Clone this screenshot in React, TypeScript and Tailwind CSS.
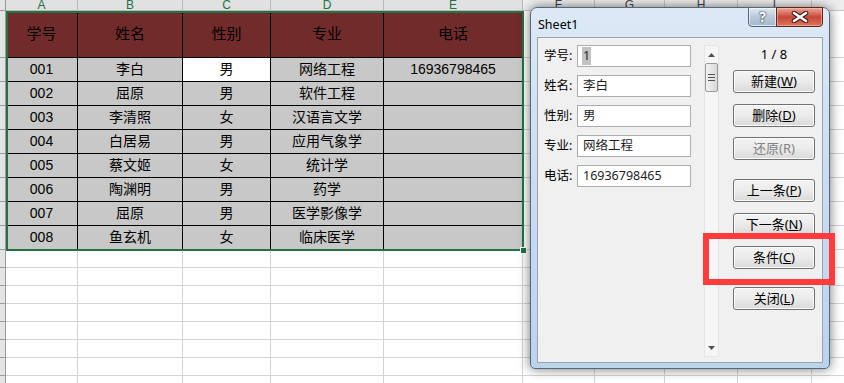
const COLS = [
  "w-[72px]", "w-[105px]", "w-[88px]", "w-[113px]", "w-[139px]",
  "w-[72px]", "w-[70px]", "w-[73px]", "w-[74px]", "w-[74px]",
];
const LETTERS = ["A", "B", "C", "D", "E", "F", "G", "H", "I", "J"];
const HEAD = ["学号", "姓名", "性别", "专业", "电话"];
const ROWS = [
  ["001", "李白", "男", "网络工程", "16936798465"],
  ["002", "屈原", "男", "软件工程", ""],
  ["003", "李清照", "女", "汉语言文学", ""],
  ["004", "白居易", "男", "应用气象学", ""],
  ["005", "蔡文姬", "女", "统计学", ""],
  ["006", "陶渊明", "男", "药学", ""],
  ["007", "屈原", "男", "医学影像学", ""],
  ["008", "鱼玄机", "女", "临床医学", ""],
];
const FIELDS = [
  { label: "学号", value: "1" },
  { label: "姓名", value: "李白" },
  { label: "性别", value: "男" },
  { label: "专业", value: "网络工程" },
  { label: "电话", value: "16936798465" },
];

const sheetFont = { fontFamily: '"Liberation Sans", "Noto Sans CJK SC", sans-serif' };
const uiFont = { fontFamily: '"Noto Sans", "Noto Sans CJK SC", sans-serif' };

function Strip({ h }: { h: string }) {
  return <div className={`${h} w-[6px] shrink-0 bg-[#e4e4e4] border-r border-b border-[#9b9b9b]`} />;
}

function Btn({ label, keyChar, disabled, className = "" }: { label: string; keyChar: string; disabled?: boolean; className?: string }) {
  return (
    <div className={`h-[23px] w-[82px] rounded-[3px] border border-[#707070] bg-gradient-to-b from-[#f3f3f3] via-[#ebebeb] to-[#d9d9d9] shadow-[inset_0_0_0_1px_#fcfcfc] flex items-center justify-center text-[13px] ${disabled ? "text-[#838383]" : "text-black"} ${className}`}>
      {label}(<span className={disabled ? "" : "underline"}>{keyChar}</span>)
    </div>
  );
}

function Arrow({ up }: { up?: boolean }) {
  return (
    <div className="h-[17px] flex items-center justify-center">
      <svg width="7" height="4" viewBox="0 0 7 4">
        <path d={up ? "M0 4 L3.5 0 L7 4 Z" : "M0 0 L3.5 4 L7 0 Z"} fill="#505050" />
      </svg>
    </div>
  );
}

export default function App() {
  return (
    <div className="relative w-[844px] h-[383px] overflow-hidden bg-white" style={sheetFont}>
      {/* column letters */}
      <div className="flex h-[11px]">
        <div className="w-[6px] shrink-0 bg-[#e4e4e4] border-r border-b border-[#9b9b9b]" />
        {COLS.map((w, i) => (
          <div key={i} className={`${w} shrink-0 h-[11px] overflow-hidden flex items-end justify-center border-r border-b ${i < 5 ? "bg-[#e1e1e1] border-[#b8b8b8] text-[#217346]" : "bg-[#eeeeee] border-[#c6c6c6] text-[#444]"}`}>
            <span className="text-[12px] leading-[12px] translate-y-[1px]">{LETTERS[i]}</span>
          </div>
        ))}
      </div>

      {/* header row */}
      <div className="flex">
        <Strip h="h-[47px]" />
        {COLS.map((w, i) =>
          i < 5 ? (
            <div key={i} className={`${w} shrink-0 h-[47px] bg-[#722b2b] border-r border-b border-black flex items-center justify-center text-[15px] text-black`}>
              {HEAD[i]}
            </div>
          ) : (
            <div key={i} className={`${w} shrink-0 h-[47px] border-r border-b border-[#d4d4d4]`} />
          )
        )}
      </div>

      {/* data rows */}
      {ROWS.map((r, ri) => (
        <div key={ri} className="flex">
          <Strip h="h-[24px]" />
          {COLS.map((w, i) =>
            i < 5 ? (
              <div key={i} className={`${w} shrink-0 h-[24px] border-r border-b border-black flex items-center justify-center text-[14px] text-black ${ri === 0 && i === 2 ? "bg-white" : "bg-[#c8c8c8]"}`}>
                {r[i]}
              </div>
            ) : (
              <div key={i} className={`${w} shrink-0 h-[24px] border-r border-b border-[#d4d4d4]`} />
            )
          )}
        </div>
      ))}

      {/* empty rows */}
      {Array.from({ length: 8 }).map((_, ri) => (
        <div key={ri} className="flex">
          <Strip h="h-[18px]" />
          {COLS.map((w, i) => (
            <div key={i} className={`${w} shrink-0 h-[18px] border-r border-b border-[#d4d4d4]`} />
          ))}
        </div>
      ))}

      {/* selection border */}
      <div className="absolute left-[6px] top-[11px] w-[518px] h-[240px] border-2 border-[#217346]" />
      <div className="absolute left-[521px] top-[248px] w-[5px] h-[5px] bg-[#217346] outline outline-1 outline-white" />

      {/* dialog */}
      <div className="absolute left-[530px] top-[7px] w-[300px] h-[362px] rounded-t-[7px] rounded-b-[5px] border border-[#55677b] bg-gradient-to-b from-[#dde9f6] via-[#cadcf0] to-[#bcd3ec] shadow-[0_0_12px_rgba(0,0,0,0.55)] flex flex-col px-[6px] pb-[5px]" style={uiFont}>
        <div className="h-[29px] flex items-start justify-between">
          <span className="mt-[8px] ml-[1px] text-[12.5px] text-black">Sheet1</span>
          <div className="flex -mt-px">
            <div className="w-[29px] h-[20px] rounded-bl-[4px] border border-[#56687c] bg-gradient-to-b from-[#dfe8f2] via-[#b9c9da] to-[#a4b8cd] shadow-[inset_0_0_0_1px_rgba(255,255,255,0.6)] flex items-center justify-center">
              <span className="text-[14px] font-bold leading-none text-white [text-shadow:0_0_1px_#1e2a38,0_0_2px_#1e2a38]">?</span>
            </div>
            <div className="w-[47px] h-[20px] -ml-px rounded-br-[4px] border border-[#5e241d] bg-gradient-to-b from-[#e9a897] via-[#c7463a] to-[#d9745c] shadow-[inset_0_0_0_1px_rgba(255,200,190,0.5)] flex items-center justify-center">
              <svg width="18" height="12" viewBox="0 0 18 12">
                <path d="M3 2 L15 10 M15 2 L3 10" stroke="#4a1a14" strokeWidth="4.6" strokeLinecap="round" />
                <path d="M3 2 L15 10 M15 2 L3 10" stroke="#fff" strokeWidth="2.6" strokeLinecap="round" />
              </svg>
            </div>
          </div>
        </div>

        <div className="flex-1 bg-[#f0f0f0] border border-[#95a6b9] flex">
          {/* fields */}
          <div className="flex flex-col gap-[8px] pt-[7px] pl-[6px] w-[154px]">
            {FIELDS.map((f, i) => (
              <div key={f.label} className="flex items-center h-[22px]">
                <span className="w-[33px] text-[12.5px] text-black">{f.label}:</span>
                <div className="w-[114px] h-[22px] bg-white border border-[#abadb3] flex items-center pl-[4px] text-[12.5px] text-[#1e1e1e]">
                  <span className={i === 0 ? "bg-[#c2c2c2] px-[1px]" : "px-[1px]"}>{f.value}</span>
                </div>
              </div>
            ))}
          </div>

          {/* scrollbar */}
          <div className="ml-[12px] mt-[7px] mb-[5px] w-[15px] bg-[#f6f6f6] border border-[#e6e6e6] flex flex-col">
            <Arrow up />
            <div className="h-[29px] rounded-[2px] border border-[#9a9a9a] bg-gradient-to-r from-[#f2f2f2] to-[#d9d9d9] flex flex-col items-center justify-center gap-[2px]">
              <div className="w-[7px] h-px bg-[#555]" />
              <div className="w-[7px] h-px bg-[#555]" />
              <div className="w-[7px] h-px bg-[#555]" />
            </div>
            <div className="flex-1" />
            <Arrow />
          </div>

          {/* buttons */}
          <div className="ml-[14px] flex flex-col">
            <div className="mt-[7px] h-[20px] w-[82px] flex items-center justify-center text-[13px] text-black">1 / 8</div>
            <Btn className="mt-[5px]" label="新建" keyChar="W" />
            <Btn className="mt-[11px]" label="删除" keyChar="D" />
            <Btn className="mt-[10px]" label="还原" keyChar="R" disabled />
            <Btn className="mt-[19px]" label="上一条" keyChar="P" />
            <Btn className="mt-[11px]" label="下一条" keyChar="N" />
            <Btn className="mt-[10px]" label="条件" keyChar="C" />
            <Btn className="mt-[18px]" label="关闭" keyChar="L" />
          </div>
        </div>
      </div>

      {/* annotation */}
      <div className="absolute left-[703px] top-[233px] w-[132px] h-[52px] border-[6px] border-[#ff3b3b]" />
    </div>
  );
}
